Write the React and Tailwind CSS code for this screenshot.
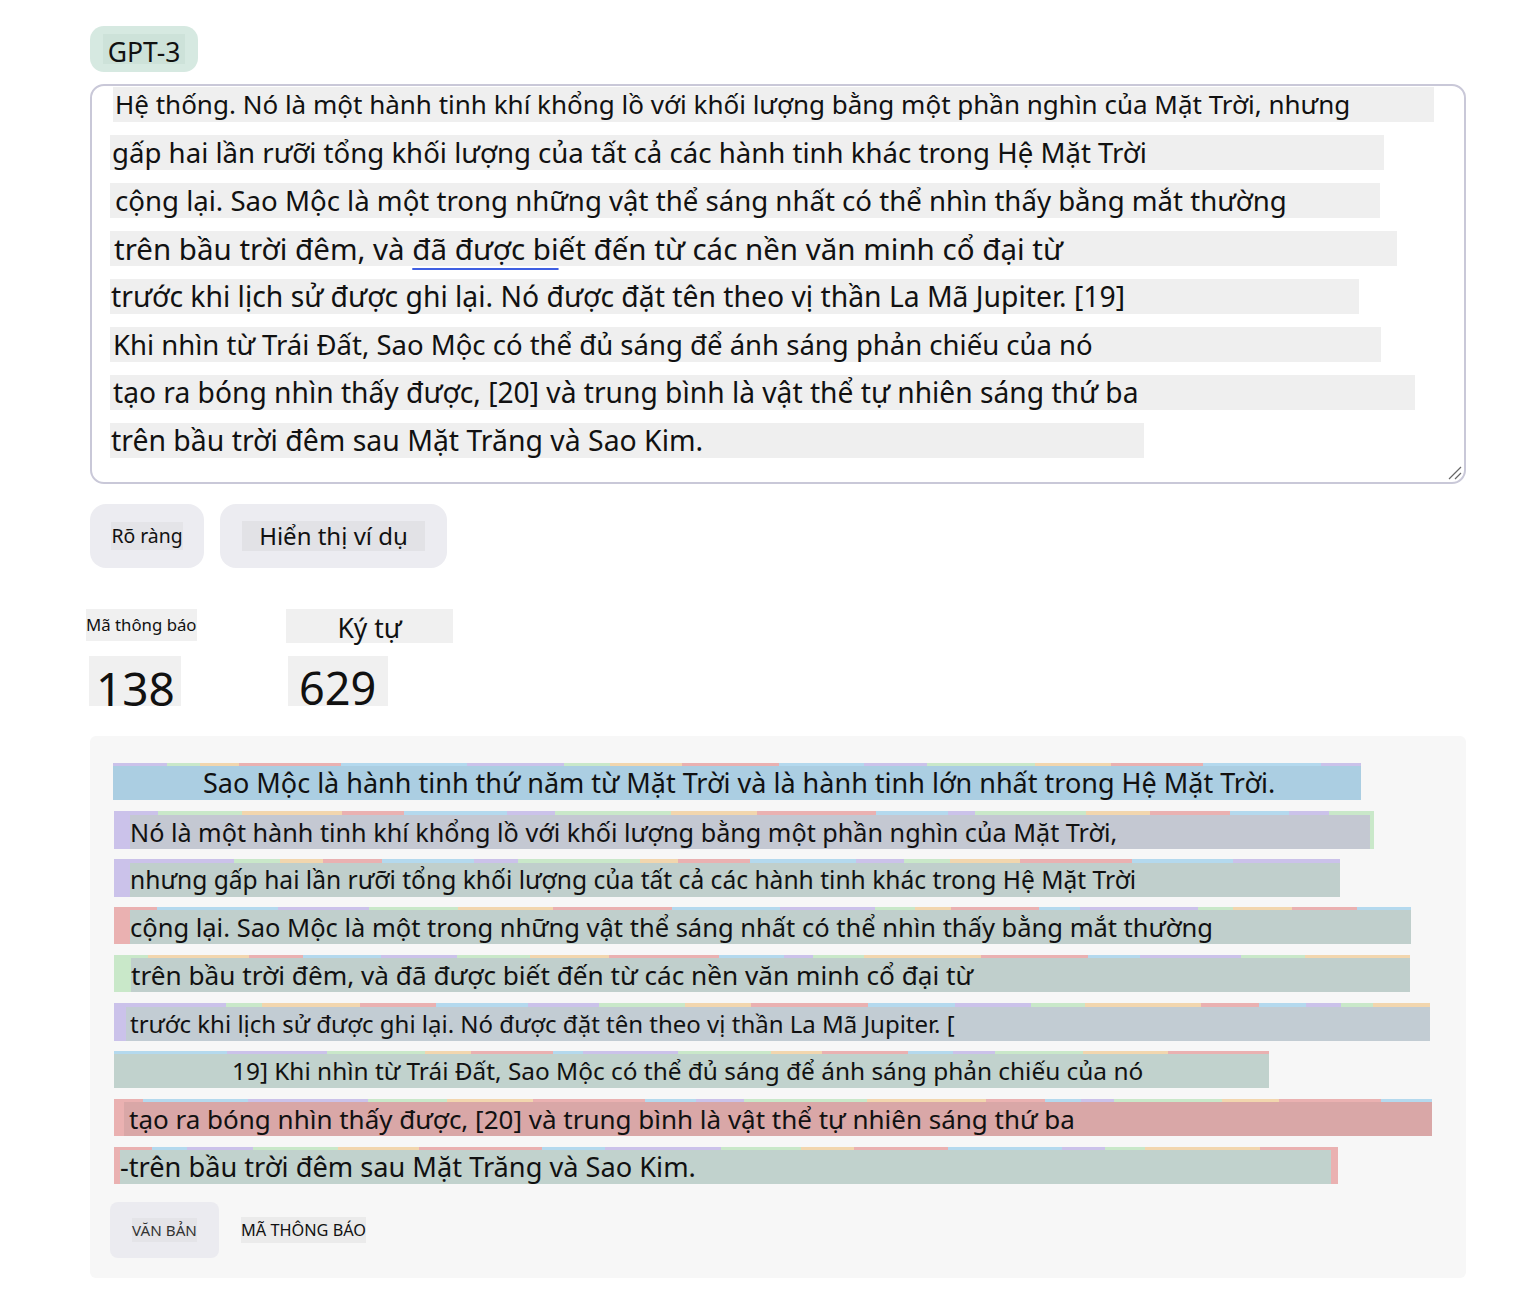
const P = '#cbc2ea';
const G = '#c9e8c9';
const O = '#f2d6ae';
const R = '#eab1b1';
const B = '#b4d9ee';
const CYCLE = [P, G, O, R, B];

// pseudo random token widths so every row gets its own stripe pattern
function makeSegments(seed, start, count) {
  let s = seed;
  const out = [];
  for (let i = 0; i < count; i++) {
    s = (s * 9301 + 49297) % 233280;
    out.push({ grow: 30 + (s % 110), color: CYCLE[(start + i) % 5] });
  }
  return out;
}

const textLines = [
  { cls: 'ml-[21px] w-[1321px] pl-[2px] text-[26px]', text: 'Hệ thống. Nó là một hành tinh khí khổng lồ với khối lượng bằng một phần nghìn của Mặt Trời, nhưng' },
  { cls: 'ml-[18px] w-[1274px] pl-[2px] text-[27.6px]', text: 'gấp hai lần rưỡi tổng khối lượng của tất cả các hành tinh khác trong Hệ Mặt Trời' },
  { cls: 'ml-[18px] w-[1270px] pl-[5px] text-[27.6px]', text: 'cộng lại. Sao Mộc là một trong những vật thể sáng nhất có thể nhìn thấy bằng mắt thường' },
  { cls: 'ml-[18px] w-[1287px] pl-[4px] text-[29.5px]', text: 'underline' },
  { cls: 'ml-[18px] w-[1249px] pl-[1px] text-[28.3px]', text: 'trước khi lịch sử được ghi lại. Nó được đặt tên theo vị thần La Mã Jupiter. [19]' },
  { cls: 'ml-[18px] w-[1271px] pl-[3px] text-[27.5px]', text: 'Khi nhìn từ Trái Đất, Sao Mộc có thể đủ sáng để ánh sáng phản chiếu của nó' },
  { cls: 'ml-[18px] w-[1305px] pl-[3px] text-[28.2px]', text: 'tạo ra bóng nhìn thấy được, [20] và trung bình là vật thể tự nhiên sáng thứ ba' },
  { cls: 'ml-[18px] w-[1034px] pl-[1px] text-[28.4px]', text: 'trên bầu trời đêm sau Mặt Trăng và Sao Kim.' },
];

const tokenRows = [
  { outer: 'ml-[23px] w-[1248px]', box: 'ml-0 mr-0 mt-[3px] bg-[#abcee2] pl-[90px] text-[27px]', seed: 11, start: 0, n: 16, text: 'Sao Mộc là hành tinh thứ năm từ Mặt Trời và là hành tinh lớn nhất trong Hệ Mặt Trời.' },
  { outer: 'ml-[24px] w-[1260px]', box: 'ml-[16px] mr-[4px] mt-[4px] bg-[#c4c8d2] pl-0 text-[25.2px]', seed: 23, start: 0, n: 17, text: 'Nó là một hành tinh khí khổng lồ với khối lượng bằng một phần nghìn của Mặt Trời,' },
  { outer: 'ml-[24px] w-[1226px]', box: 'ml-[16px] mr-0 mt-[4px] bg-[#c0cfcc] pl-0 text-[24.6px]', seed: 37, start: 0, n: 16, text: 'nhưng gấp hai lần rưỡi tổng khối lượng của tất cả các hành tinh khác trong Hệ Mặt Trời' },
  { outer: 'ml-[24px] w-[1297px]', box: 'ml-[16px] mr-0 mt-[3px] bg-[#c0cfcc] pl-0 text-[25.5px]', seed: 41, start: 3, n: 17, text: 'cộng lại. Sao Mộc là một trong những vật thể sáng nhất có thể nhìn thấy bằng mắt thường' },
  { outer: 'ml-[24px] w-[1296px]', box: 'ml-[17px] mr-0 mt-[3px] bg-[#c0cfcc] pl-0 text-[26.2px]', seed: 53, start: 1, n: 17, text: 'trên bầu trời đêm, và đã được biết đến từ các nền văn minh cổ đại từ' },
  { outer: 'ml-[24px] w-[1316px]', box: 'ml-[12px] mr-0 mt-[4px] bg-[#c2ccd3] pl-[4px] text-[24px]', seed: 67, start: 0, n: 18, text: 'trước khi lịch sử được ghi lại. Nó được đặt tên theo vị thần La Mã Jupiter. [' },
  { outer: 'ml-[24px] w-[1155px]', box: 'ml-0 mr-0 mt-[3px] bg-[#c1d2cd] pl-[118px] text-[24.4px]', seed: 79, start: 4, n: 15, text: '19] Khi nhìn từ Trái Đất, Sao Mộc có thể đủ sáng để ánh sáng phản chiếu của nó' },
  { outer: 'ml-[24px] w-[1318px]', box: 'ml-[10px] mr-0 mt-[3px] bg-[#d9a7a7] pl-[5px] text-[26px]', seed: 83, start: 3, n: 17, text: 'tạo ra bóng nhìn thấy được, [20] và trung bình là vật thể tự nhiên sáng thứ ba' },
  { outer: 'ml-[24px] w-[1224px]', box: 'ml-[6px] mr-[7px] mt-[3px] bg-[#c1d2cd] -pl-0 text-[27.2px]', seed: 97, start: 3, n: 16, text: '-trên bầu trời đêm sau Mặt Trăng và Sao Kim.' },
];

function TokenRow({ row }) {
  const segs = makeSegments(row.seed, row.start, row.n);
  return (
    <div className={`grid h-[37px] ${row.outer}`}>
      <div className="col-start-1 row-start-1 flex h-full">
        {segs.map((s, i) => (
          <div key={i} className="h-full" style={{ flexGrow: s.grow, background: s.color }} />
        ))}
      </div>
      <div className={`col-start-1 row-start-1 h-[34px] whitespace-nowrap leading-[34px] text-[#111] ${row.box}`}>
        {row.text}
      </div>
    </div>
  );
}

export default function App() {
  return (
    <div className="min-h-[1292px] w-[1528px] bg-white pt-[26px] pl-[90px] text-[#111]" style={{ fontFamily: '"Noto Sans", "Open Sans", sans-serif' }}>
      <div className="flex h-[46px] w-[108px] items-center justify-center rounded-[14px] bg-[#d6e9e1]">
        <span className="h-[30px] bg-[#cde2d9] px-[5px] text-[26.5px] leading-[36px]">GPT-3</span>
      </div>

      <div className="relative mt-[12px] h-[400px] w-[1376px] rounded-[14px] border-2 border-[#c9c8d8] pt-[1px]">
        <div className="flex flex-col gap-[13px]">
          {textLines.map((l, i) => (
            <div key={i} className={`h-[35px] whitespace-nowrap bg-[#efefef] leading-[35px] ${l.cls}`}>
              {l.text === 'underline' ? (
                <>
                  trên bầu trời đêm, và{' '}
                  <span className="underline decoration-[#3f5fe2] decoration-2 underline-offset-[8px]">đã được bi</span>
                  ết đến từ các nền văn minh cổ đại từ
                </>
              ) : (
                l.text
              )}
            </div>
          ))}
        </div>
        <svg className="absolute right-[2px] bottom-[2px]" width="16" height="16" viewBox="0 0 16 16">
          <path d="M15 3 L3 15 M15 9 L9 15" stroke="#666" strokeWidth="1.2" />
        </svg>
      </div>

      <div className="mt-[20px] flex gap-[16px]">
        <button className="flex h-[64px] w-[114px] items-center justify-center rounded-[16px] bg-[#ececf1]">
          <span className="bg-[#e4e4e8] text-[19.4px] leading-[28px]">Rõ ràng</span>
        </button>
        <button className="flex h-[64px] w-[227px] items-center justify-center rounded-[16px] bg-[#ececf1]">
          <span className="bg-[#e2e2e6] px-[17px] text-[24px] leading-[30px]">Hiển thị ví dụ</span>
        </button>
      </div>

      <div className="mt-[41px] flex">
        <div className="w-[196px]">
          <div className="-ml-[4px] h-[32px] w-[111px] bg-[#f0f0f0] text-[16.8px] leading-[32px]">Mã thông báo</div>
          <div className="mt-[15px] -ml-[1px] h-[50px] w-[92px] bg-[#f0f0f0] pl-[7px] text-[46px] leading-[64px]">138</div>
        </div>
        <div>
          <div className="h-[34px] w-[167px] bg-[#f0f0f0] text-center text-[26.5px] leading-[38px]">Ký tự</div>
          <div className="mt-[13px] ml-[2px] h-[50px] w-[100px] bg-[#f0f0f0] pl-[11px] text-[45px] leading-[64px]">629</div>
        </div>
      </div>

      <div className="mt-[30px] w-[1376px] rounded-[6px] bg-[#f7f7f7] pt-[27px] pb-[20px]">
        <div className="flex flex-col gap-[11px]">
          {tokenRows.map((r, i) => (
            <TokenRow key={i} row={r} />
          ))}
        </div>
        <div className="mt-[18px] ml-[20px] flex items-center gap-[22px]">
          <button className="flex h-[56px] w-[109px] items-center justify-center rounded-[8px] bg-[#ebebf0]">
            <span className="bg-[#e4e4e8] text-[15.2px] leading-[24px] text-[#333]">VĂN BẢN</span>
          </button>
          <span className="bg-[#ebebeb] text-[16.3px] leading-[26px] text-[#111]">MÃ THÔNG BÁO</span>
        </div>
      </div>
    </div>
  );
}
